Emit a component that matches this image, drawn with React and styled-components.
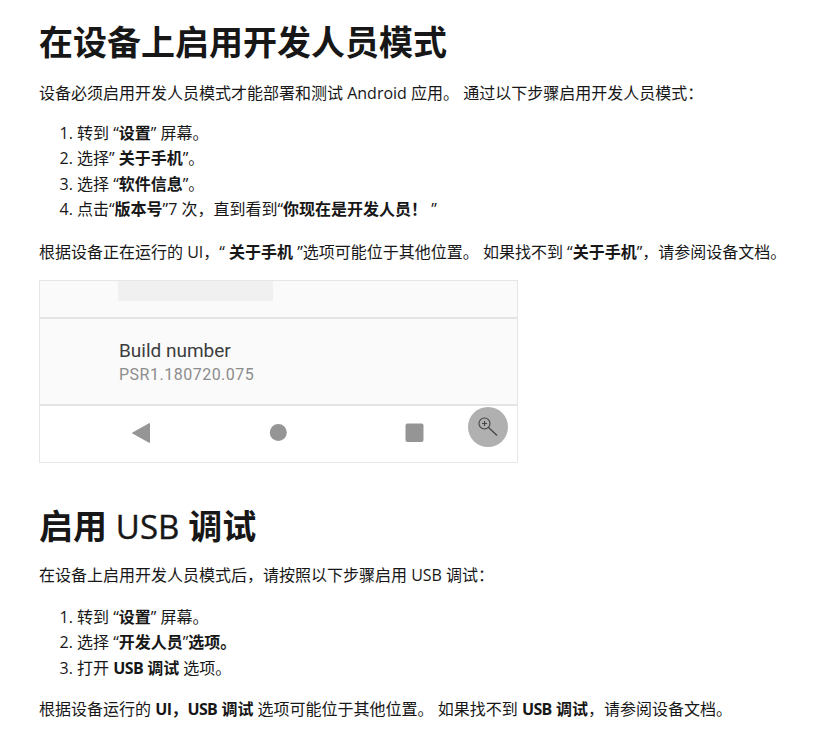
import React from "react";
import styled, { createGlobalStyle } from "styled-components";

const GlobalStyle = createGlobalStyle`
  body {
    margin: 0;
    background: #fff;
    color: #171717;
    font-family: "Open Sans", "Noto Sans CJK SC", sans-serif;
    font-size: 16px;
  }
`;

const Page = styled.main`
  padding: 14px 0 0 39px;
  width: 780px;
`;

const Heading = styled.h1`
  margin: ${({ $second }) => ($second ? "35px 0 0" : "0")};
  font-size: 34px;
  line-height: 56px;
  font-weight: 700;
`;

const HeadingLatin = styled.span`
  font-weight: 400;
  font-size: 33px;
  -webkit-text-stroke: 0.4px #171717;
`;

const BoldLatin = styled.b`
  letter-spacing: -0.6px;
`;

const Intro = styled.p`
  margin: ${({ $second }) => ($second ? "8px 0 0" : "11px 0 0")};
  line-height: 24px;
  white-space: nowrap;
`;

const Note = styled.p`
  margin: ${({ $second }) => ($second ? "16px 0 0" : "18px 0 0")};
  line-height: 24px;
  white-space: nowrap;
`;

const Steps = styled.ol`
  margin: ${({ $second }) => ($second ? "18px 0 0" : "16px 0 0")};
  padding-left: 38px;
  line-height: 25.3px;
`;

const Shot = styled.div`
  position: relative;
  width: 479px;
  height: 183px;
  margin-top: 16px;
  box-sizing: border-box;
  border: 1px solid #e6e6e6;
  display: flex;
  flex-direction: column;
  font-family: Roboto, sans-serif;
`;

const TopRow = styled.div`
  height: 36px;
  background: #fafafa;
  border-bottom: 2px solid #e4e4e4;
  padding-left: 78px;
`;

const Placeholder = styled.div`
  width: 155px;
  height: 20px;
  background: #f0f0f0;
`;

const BuildRow = styled.div`
  height: 87px;
  box-sizing: border-box;
  background: #fafafa;
  border-bottom: 2px solid #e4e4e4;
  padding: 20px 0 0 79px;
`;

const BuildTitle = styled.div`
  font-size: 19px;
  line-height: 24px;
  color: #3d3d3d;
`;

const BuildValue = styled.div`
  font-size: 16px;
  line-height: 24px;
  letter-spacing: 0.5px;
  color: #8c8c8c;
`;

const NavBar = styled.div`
  flex: 1;
  background: #fff;
`;

const NavIcons = styled.svg`
  display: block;
`;

const ZoomButton = styled.div`
  position: absolute;
  right: 9px;
  bottom: 15px;
  width: 40px;
  height: 40px;
  border-radius: 50%;
  background: #b0b0b0;
  display: flex;
  align-items: center;
  justify-content: center;
`;

export default function App() {
  return (
    <>
      <GlobalStyle />
      <Page>
        <Heading>在设备上启用开发人员模式</Heading>
        <Intro>设备必须启用开发人员模式才能部署和测试 Android 应用。 通过以下步骤启用开发人员模式：</Intro>
        <Steps>
          <li>转到 “<b>设置</b>” 屏幕。</li>
          <li>选择” <b>关于手机</b>”。</li>
          <li>选择 “<b>软件信息</b>”。</li>
          <li>点击“<b>版本号</b>”7 次，直到看到“<b>你现在是开发人员！ </b>”</li>
        </Steps>
        <Note>
          根据设备正在运行的 UI，“ <b>关于手机</b> ”选项可能位于其他位置。 如果找不到 “<b>关于手机</b>”，请参阅设备文档。
        </Note>
        <Shot>
          <TopRow>
            <Placeholder />
          </TopRow>
          <BuildRow>
            <BuildTitle>Build number</BuildTitle>
            <BuildValue>PSR1.180720.075</BuildValue>
          </BuildRow>
          <NavBar>
            <NavIcons width="477" height="54" viewBox="0 0 477 54">
              <path d="M92.5 27 L109.5 17.5 V36.5 Z" fill="#959595" stroke="#959595" strokeWidth="1" strokeLinejoin="round" />
              <circle cx="238.3" cy="26.5" r="8.5" fill="#959595" />
              <rect x="365.5" y="17.5" width="18" height="18.5" rx="2" fill="#959595" />
            </NavIcons>
          </NavBar>
          <ZoomButton>
            <svg width="22" height="22" viewBox="0 0 22 22" fill="none" stroke="#444" strokeWidth="1.1">
              <circle cx="7.5" cy="7.5" r="5.5" />
              <path d="M7.5 5v5M5 7.5h5" />
              <path d="M11.5 11.5 L20 19.5" strokeWidth="1.3" />
            </svg>
          </ZoomButton>
        </Shot>
        <Heading $second>启用 <HeadingLatin>USB</HeadingLatin> 调试</Heading>
        <Intro $second>在设备上启用开发人员模式后，请按照以下步骤启用 USB 调试：</Intro>
        <Steps $second>
          <li>转到 “<b>设置</b>” 屏幕。</li>
          <li>选择 “<b>开发人员</b>”<b>选项。</b></li>
          <li>打开 <BoldLatin>USB</BoldLatin> <b>调试</b> 选项。</li>
        </Steps>
        <Note $second>
          根据设备运行的 <BoldLatin>UI</BoldLatin><b>，</b><BoldLatin>USB</BoldLatin> <b>调试</b> 选项可能位于其他位置。 如果找不到 <BoldLatin>USB</BoldLatin> <b>调试</b>，请参阅设备文档。
        </Note>
      </Page>
    </>
  );
}
